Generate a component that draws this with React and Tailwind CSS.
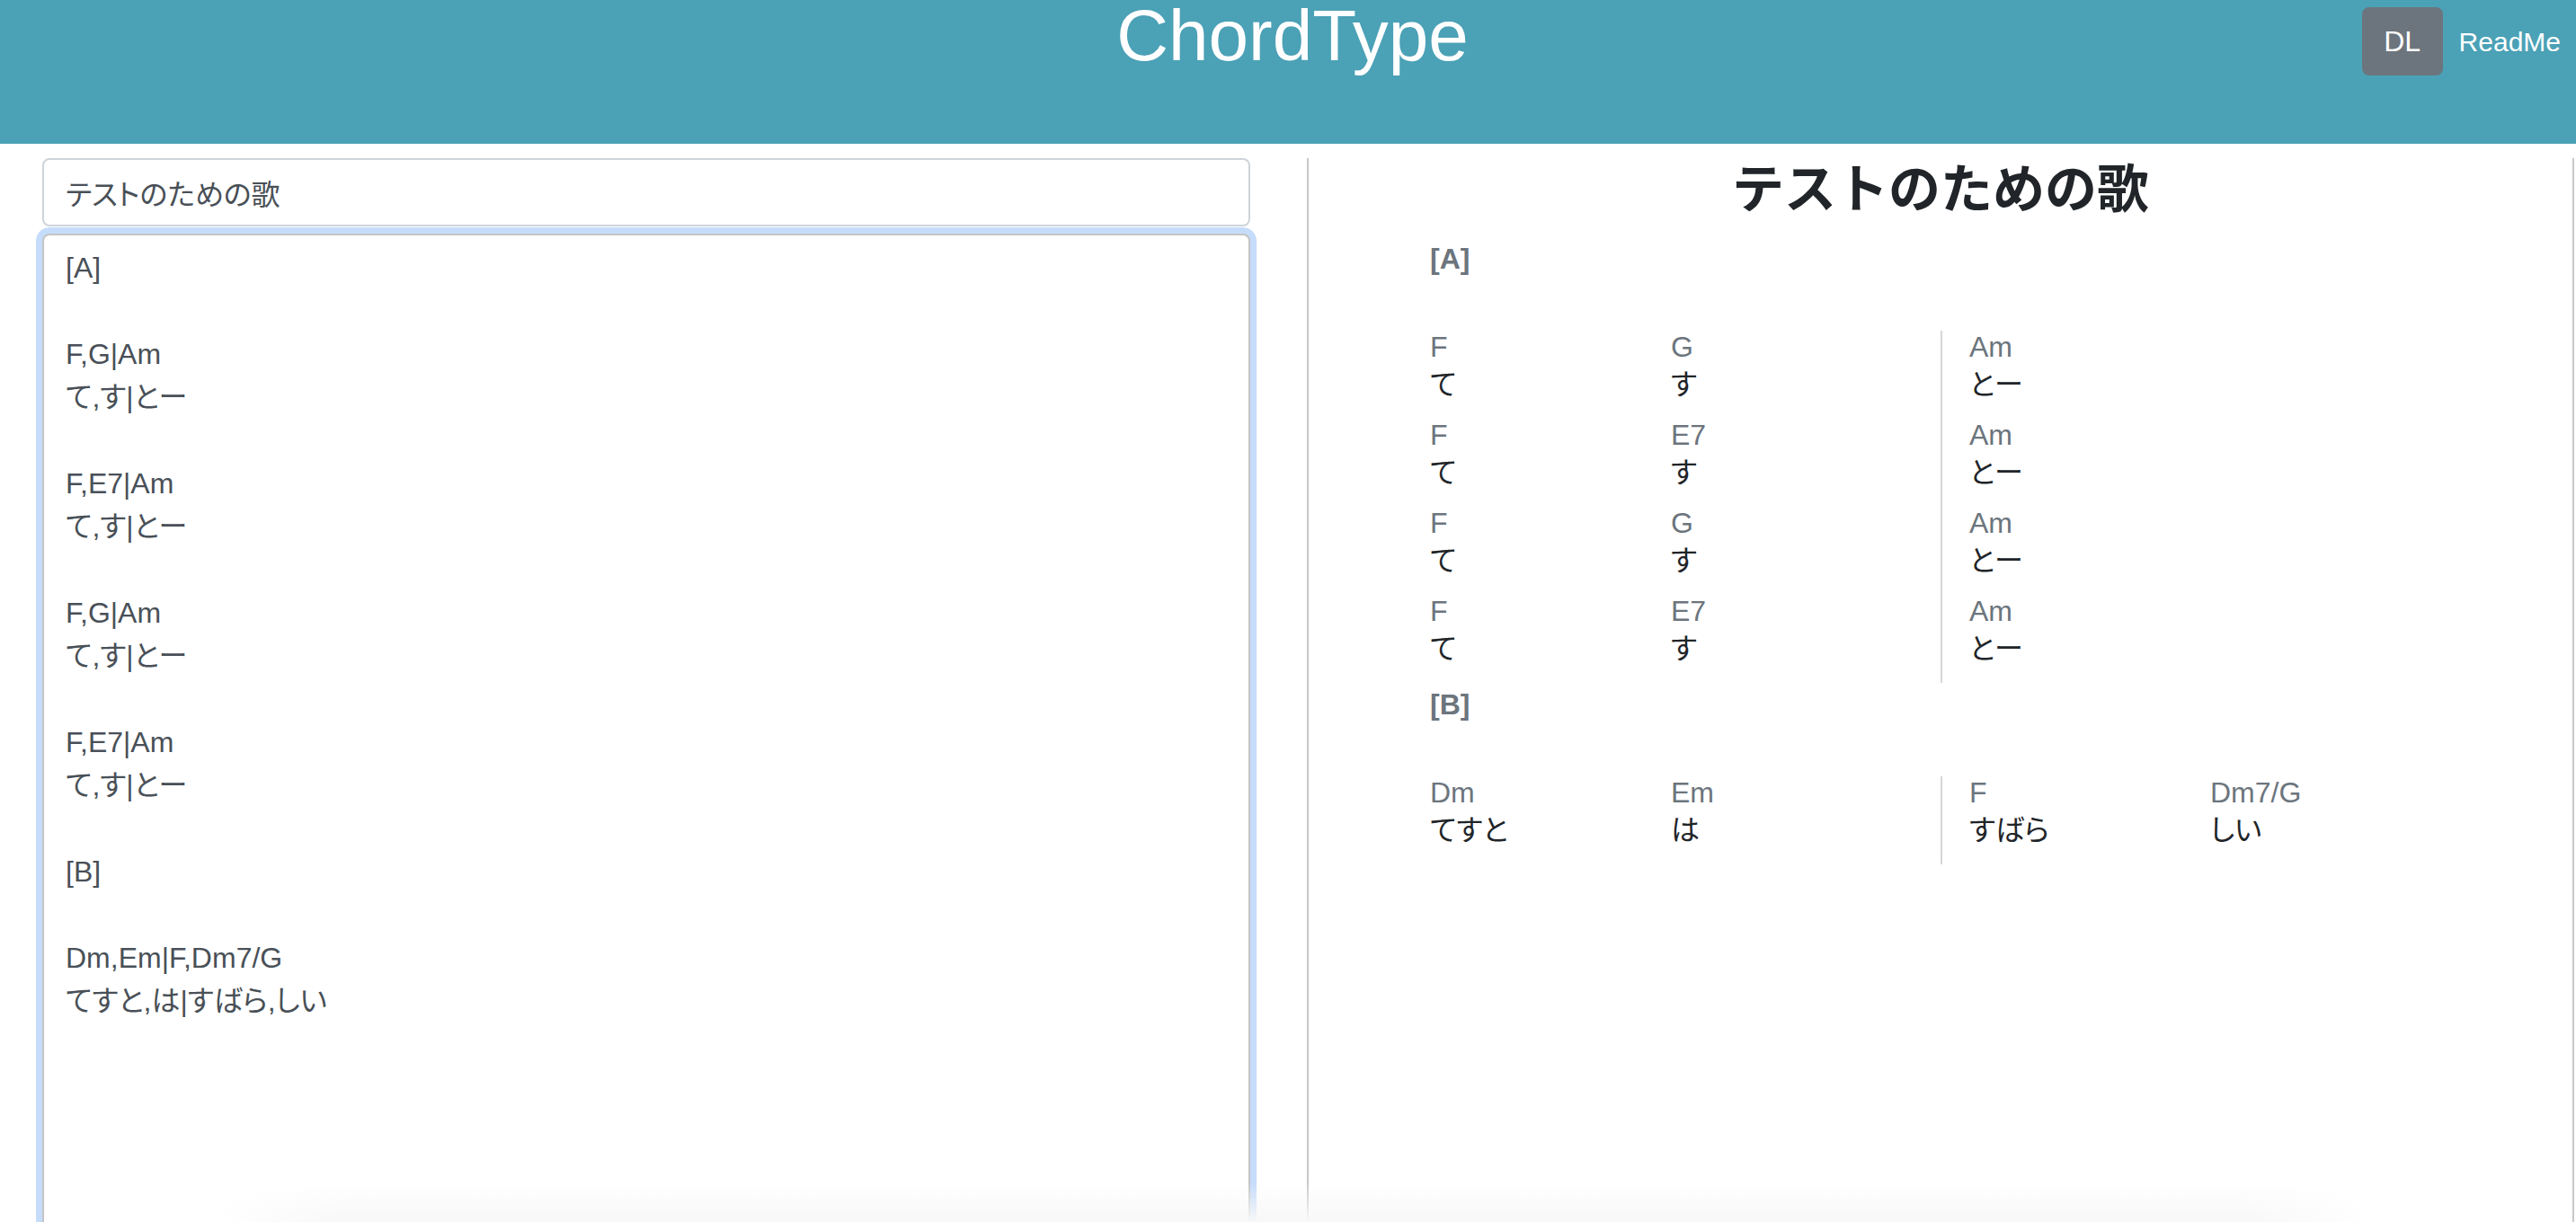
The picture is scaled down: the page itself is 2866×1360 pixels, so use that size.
const SONG_TITLE = "テストのための歌";

const SONG_TEXT = `[A]

F,G|Am
て,す|とー

F,E7|Am
て,す|とー

F,G|Am
て,す|とー

F,E7|Am
て,す|とー

[B]

Dm,Em|F,Dm7/G
てすと,は|すばら,しい`;

const FONT = "font-['Liberation_Sans','Noto_Sans_CJK_JP',sans-serif]";

// chord line + lyric line -> bars of { chord, lyric }
function parseSong(text) {
    const sections = [];
    let current = null;
    const lines = text.split("\n").filter((l) => l.trim() !== "");

    for (let i = 0; i < lines.length; i++) {
        const line = lines[i];

        if (/^\[.+\]$/.test(line)) {
            current = { name: line, rows: [] };
            sections.push(current);
            continue;
        }

        const chordBars = line.split("|").map((bar) => bar.split(","));
        const lyricBars = (lines[i + 1] || "")
            .split("|")
            .map((bar) => bar.split(","));
        i++;

        current?.rows.push(
            chordBars.map((beats, b) =>
                beats.map((chord, c) => ({
                    chord,
                    lyric: lyricBars[b]?.[c] ?? "",
                })),
            ),
        );
    }

    return sections;
}

function Header() {
    return (
        <header className="grid h-[160px] grid-cols-[1fr_auto_1fr] bg-[#4ba1b6] text-white">
            <div />
            <h1 className="pl-[10px] text-[80px] leading-none font-normal">ChordType</h1>
            <div className="mt-[8px] flex h-[76px] items-center justify-end gap-[18px] pr-[17px]">
                <button className="h-[76px] w-[90px] rounded-[8px] bg-[#6c757d] text-[32px] text-white">
                    DL
                </button>
                <a className="text-[30px] text-white">ReadMe</a>
            </div>
        </header>
    );
}

function Editor() {
    return (
        <div className="flex flex-col pl-[47px] pr-[42px]">
            <input
                readOnly
                value={SONG_TITLE}
                className="h-[76px] w-full rounded-[8px] border-2 border-[#ced4da] bg-white px-[24px] text-[32px] text-[#495057] outline-none [font-feature-settings:'palt']"
            />
            <textarea
                readOnly
                defaultValue={SONG_TEXT}
                className="mt-[8px] h-[1300px] w-full resize-none overflow-hidden rounded-[8px] border-2 border-[#c4c4c4] bg-white px-[24px] py-[12px] text-[32px] leading-[48px] text-[#495057] shadow-[0_0_0_7px_#c6dcfb] outline-none [font-feature-settings:'palt']"
            />
        </div>
    );
}

function SongRow({ bars }) {
    return (
        <div className="flex">
            {bars.map((beats, i) => (
                <div
                    key={i}
                    className={
                        i > 0
                            ? "flex w-[600px] border-l-2 border-[#d6d6d6] pl-[30px] pr-[32px]"
                            : "flex w-[600px] px-[32px]"
                    }
                >
                    {beats.map((beat, j) => (
                        <div key={j} className="flex w-[268px] flex-col pb-[14px]">
                            <span className="text-[32px] leading-[36px] text-[#6c757d]">
                                {beat.chord}
                            </span>
                            <span className="text-[32px] leading-[48px] text-[#212529] [font-feature-settings:'palt']">
                                {beat.lyric}
                            </span>
                        </div>
                    ))}
                </div>
            ))}
        </div>
    );
}

function Preview({ sections }) {
    return (
        <div className="ml-[21px] mr-[2px] h-full border-x-2 border-[#c8c8c8]">
            <h2 className="mb-[18px] text-center text-[58px] leading-[70px] font-bold text-[#212529]">
                {SONG_TITLE}
            </h2>
            <div className="mx-auto w-[1200px]">
                {sections.map((section) => (
                    <div key={section.name}>
                        <p className="mb-[56px] pl-[32px] text-[32px] leading-[48px] font-bold text-[#6c757d]">
                            {section.name}
                        </p>
                        {section.rows.map((bars, i) => (
                            <SongRow key={i} bars={bars} />
                        ))}
                    </div>
                ))}
            </div>
        </div>
    );
}

export default function App() {
    const sections = parseSong(SONG_TEXT);

    return (
        <div className={`relative h-screen overflow-hidden bg-white ${FONT}`}>
            <Header />
            <main className="grid h-full grid-cols-2 pt-[16px]">
                <Editor />
                <Preview sections={sections} />
            </main>
            <div className="pointer-events-none absolute bottom-0 left-[240px] right-[226px] h-[44px] bg-gradient-to-b from-transparent to-[#f8f8f8] [mask-image:linear-gradient(to_right,transparent,black_6%,black_94%,transparent)]" />
        </div>
    );
}
